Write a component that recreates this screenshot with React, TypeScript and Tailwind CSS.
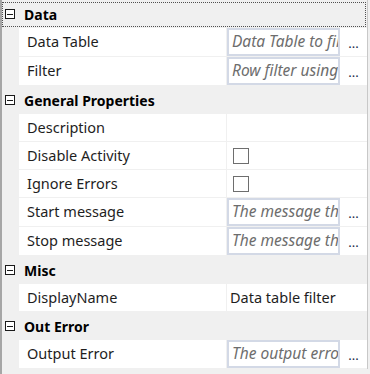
import React from "react";

type Prop = {
  name: string;
  kind: "text" | "check" | "value" | "empty";
  value?: string;
};

type Category = {
  title: string;
  props: Prop[];
};

const categories: Category[] = [
  {
    title: "Data",
    props: [
      { name: "Data Table", kind: "text", value: "Data Table to filter" },
      { name: "Filter", kind: "text", value: "Row filter using" },
    ],
  },
  {
    title: "General Properties",
    props: [
      { name: "Description", kind: "empty" },
      { name: "Disable Activity", kind: "check" },
      { name: "Ignore Errors", kind: "check" },
      { name: "Start message", kind: "text", value: "The message that" },
      { name: "Stop message", kind: "text", value: "The message that" },
    ],
  },
  {
    title: "Misc",
    props: [{ name: "DisplayName", kind: "value", value: "Data table filter" }],
  },
  {
    title: "Out Error",
    props: [{ name: "Output Error", kind: "text", value: "The output error" }],
  },
];

function MinusBox() {
  return (
    <div className="w-[10px] h-[10px] border border-[#1a1a1a] bg-white flex items-center justify-center">
      <div className="w-[6px] h-px bg-[#1a1a1a]" />
    </div>
  );
}

function CategoryRow({ title, focused }: { title: string; focused?: boolean }) {
  return (
    <div className="h-[28px] flex items-center relative">
      {focused && (
        <div className="absolute left-0 right-[1px] top-[2px] bottom-[1px] border border-dotted border-[#505050]" />
      )}
      <div className="ml-[3px] mr-[9px]">
        <MinusBox />
      </div>
      <span className="font-bold text-[14px] text-black">{title}</span>
    </div>
  );
}

function PropRow({ prop }: { prop: Prop }) {
  const tall = prop.kind === "text";
  return (
    <div className={`flex ${tall ? "h-[29px]" : "h-[28px]"}`}>
      <div className="w-[17px] shrink-0" />
      <div className="flex flex-1 bg-white border-b border-[#f0f0f0]">
        <div className="w-[208px] shrink-0 pl-2 flex items-center border-r border-[#f0f0f0] text-[14.5px] text-[#1e1e1e]">
          {prop.name}
        </div>
        <div className="flex-1 flex items-stretch min-w-0">
          {prop.kind === "text" && (
            <>
              <div className="w-[113px] shrink-0 border-2 border-[#d3d9e6] bg-white flex items-center px-[3px] overflow-hidden whitespace-nowrap italic text-[15.5px] text-[#6d6d6d]">
                {prop.value}
              </div>
              <div className="flex-1 flex items-end justify-center pb-[6px] text-[13px] leading-none text-[#1e2a4a]">
                ...
              </div>
            </>
          )}
          {prop.kind === "check" && (
            <div className="flex items-center pl-[6px]">
              <div className="w-[16px] h-[16px] border border-[#6e6e6e] bg-white" />
            </div>
          )}
          {prop.kind === "value" && (
            <div className="flex items-center pl-[3px] text-[14.5px] text-[#1e1e1e] whitespace-nowrap">
              {prop.value}
            </div>
          )}
        </div>
      </div>
    </div>
  );
}

export default function App() {
  return (
    <div
      className="w-[370px] h-[374px] bg-[#f0f0f0] border-l-2 border-[#a6a6a6] overflow-hidden"
      style={{ fontFamily: '"Noto Sans", "Open Sans", sans-serif' }}
    >
      <div className="w-[366px] border-r border-[#c8c8c8]">
        {categories.map((cat, i) => (
          <div key={cat.title}>
            <CategoryRow title={cat.title} focused={i === 0} />
            {cat.props.map((p) => (
              <PropRow key={p.name} prop={p} />
            ))}
          </div>
        ))}
      </div>
    </div>
  );
}
